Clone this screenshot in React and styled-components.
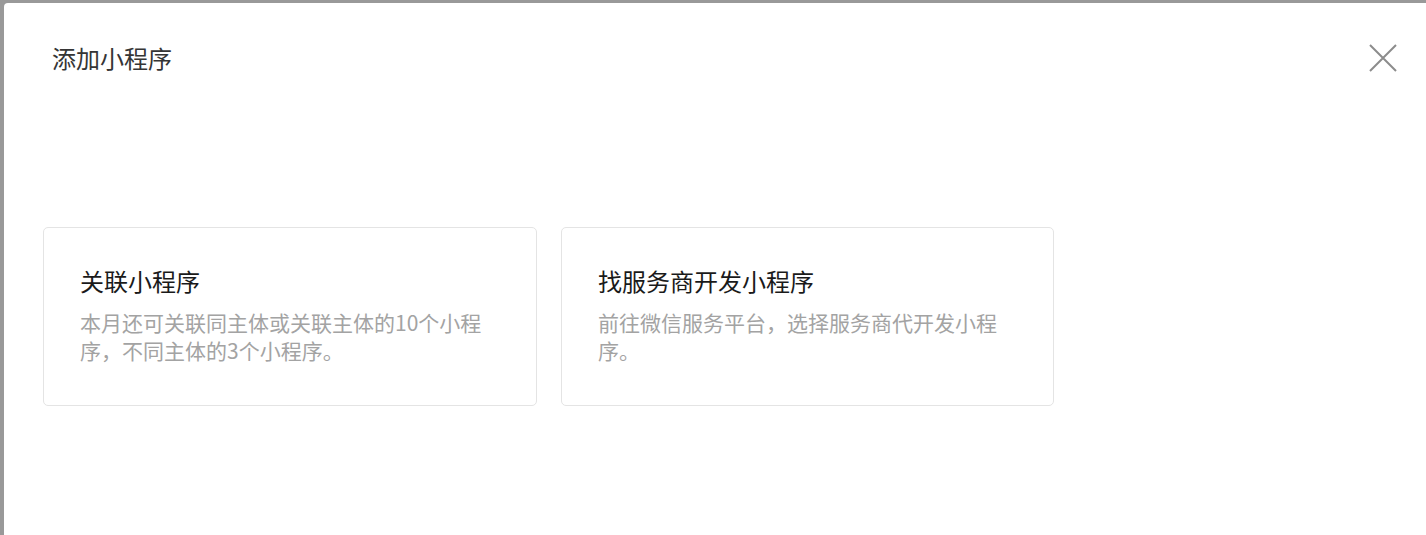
import styled, { createGlobalStyle } from "styled-components";

const GlobalStyle = createGlobalStyle`
  html, body {
    margin: 0;
    padding: 0;
    background: #999999;
    font-family: "Noto Sans CJK SC", "Noto Sans", sans-serif;
  }
`;

const Backdrop = styled.div`
  height: 535px;
  padding: 3px 0 0 4px;
  box-sizing: border-box;
  overflow: hidden;
`;

const Dialog = styled.div`
  height: 100%;
  background: #fff;
  border-radius: 4px 0 0 0;
  display: flex;
  flex-direction: column;
`;

const Header = styled.div`
  display: flex;
  align-items: flex-start;
  justify-content: space-between;
  padding: 40px 28px 0 48px;
`;

const Title = styled.h3`
  margin: 0;
  font-size: 24px;
  line-height: 30px;
  font-weight: 400;
  color: #353535;
`;

const Close = styled.button`
  width: 30px;
  height: 30px;
  padding: 0;
  border: none;
  background: none;
  cursor: pointer;
  display: flex;
  align-items: center;
  justify-content: center;
`;

const Body = styled.div`
  padding: 154px 0 0 39px;
  display: grid;
  grid-template-columns: 494px 493px;
  column-gap: 24px;
`;

const Card = styled.div`
  height: 179px;
  box-sizing: border-box;
  border: 1px solid #e4e4e4;
  border-radius: 5px;
  padding: 36px 36px;
  cursor: pointer;
`;

const CardTitle = styled.div`
  font-size: 24px;
  line-height: 34px;
  color: #1a1a1a;
`;

const CardDesc = styled.div`
  margin-top: 10px;
  font-size: 21px;
  line-height: 28px;
  color: #a3a3a3;
`;

const options = [
  {
    title: "关联小程序",
    desc: "本月还可关联同主体或关联主体的10个小程序，不同主体的3个小程序。",
  },
  {
    title: "找服务商开发小程序",
    desc: "前往微信服务平台，选择服务商代开发小程序。",
  },
];

const App = () => {
  return (
    <>
      <GlobalStyle />
      <Backdrop>
        <Dialog>
          <Header>
            <Title>添加小程序</Title>
            <Close aria-label="关闭">
              <svg width="30" height="30" viewBox="0 0 30 30">
                <path
                  d="M2 2 L28 28 M28 2 L2 28"
                  stroke="#8c8c8c"
                  strokeWidth="2"
                  fill="none"
                />
              </svg>
            </Close>
          </Header>
          <Body>
            {options.map((o) => (
              <Card key={o.title}>
                <CardTitle>{o.title}</CardTitle>
                <CardDesc>{o.desc}</CardDesc>
              </Card>
            ))}
          </Body>
        </Dialog>
      </Backdrop>
    </>
  );
};

export default App;
